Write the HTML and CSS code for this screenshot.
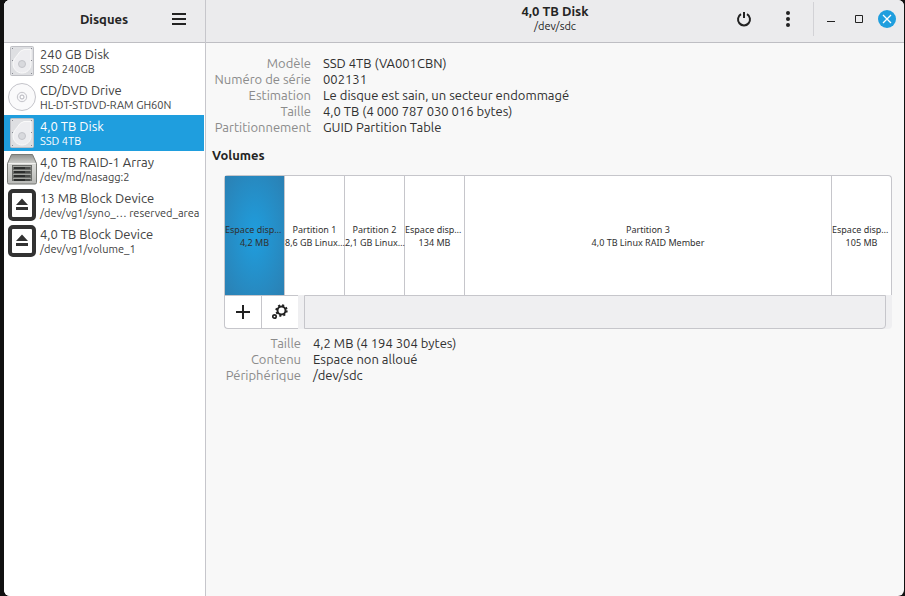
FILE: index.html
```html
<!DOCTYPE html>
<html lang="fr">
<head>
<meta charset="utf-8">
<title>Disques</title>
<link rel="stylesheet" href="styles.css">
</head>
<body>
<div class="window">
	<aside class="sidebar">
		<header class="bar side-bar">
			<h1>Disques</h1>
			<button class="icon" aria-label="Menu">
				<svg width="14" height="12" viewBox="0 0 14 12"><path d="M0 1h14M0 6h14M0 11h14" stroke="#222" stroke-width="2"/></svg>
			</button>
		</header>
		<nav class="devices">
			<button class="device">
				<svg class="pic" width="30" height="32" viewBox="0 0 30 32"><use href="#disk"/></svg>
				<span class="name">240 GB Disk<small>SSD 240GB</small></span>
			</button>
			<button class="device">
				<svg class="pic" width="30" height="32" viewBox="0 0 30 32"><circle cx="15" cy="16" r="13.5" fill="#fafafb" stroke="#c4c4ca"/><circle cx="15" cy="16" r="4.7" fill="#f6f6f8" stroke="#c4c4ca"/><circle cx="15" cy="16" r="2" fill="#fff" stroke="#b4b4bc"/></svg>
				<span class="name">CD/DVD Drive<small>HL-DT-STDVD-RAM GH60N</small></span>
			</button>
			<button class="device selected">
				<svg class="pic" width="30" height="32" viewBox="0 0 30 32"><use href="#disk"/></svg>
				<span class="name">4,0 TB Disk<small>SSD 4TB</small></span>
			</button>
			<button class="device">
				<svg class="pic" width="30" height="32" viewBox="0 0 30 32">
					<defs>
						<linearGradient id="metal" x2="0" y2="1"><stop offset="0" stop-color="#8f908d"/><stop offset=".35" stop-color="#d8d9d6"/><stop offset="1" stop-color="#b8b9b6"/></linearGradient>
					</defs>
					<path d="M4.500 1.500h21l4 9v19q0 1.500-1.500 1.500H2q-1.500 0-1.500-1.500v-19z" fill="url(#metal)" stroke="#777975"/>
					<path d="M1.500 10.500h27" stroke="#f2f2f0"/>
					<path d="M5 12h20v16H5z" fill="#6a6c69"/>
					<path d="M6 13.500h18M6 17.500h18M6 21.500h18M6 25.500h18" stroke="#a4a6a2"/>
					<path d="M7 15h11M7 19h11M7 23h11M7 27h11" stroke="#2c2e2d" stroke-width="2"/>
					<path d="M18 15h5M18 19h5M18 23h5M18 27h5" stroke="#4a4c4a" stroke-width="2"/>
				</svg>
				<span class="name">4,0 TB RAID-1 Array<small>/dev/md/nasagg:2</small></span>
			</button>
			<button class="device">
				<svg class="pic" width="30" height="32" viewBox="0 0 30 32"><use href="#block"/></svg>
				<span class="name">13 MB Block Device<small>/dev/vg1/syno_… reserved_area</small></span>
			</button>
			<button class="device">
				<svg class="pic" width="30" height="32" viewBox="0 0 30 32"><use href="#block"/></svg>
				<span class="name">4,0 TB Block Device<small>/dev/vg1/volume_1</small></span>
			</button>
		</nav>
	</aside>

	<main class="content">
		<header class="bar main-bar">
			<div class="title">
				<h2>4,0 TB Disk</h2>
				<p>/dev/sdc</p>
			</div>
			<div class="actions">
				<button class="icon" aria-label="Éteindre">
					<svg width="16" height="16" viewBox="0 0 16 16"><path d="M5 3.200a6 6 0 1 0 6 0" fill="none" stroke="#222" stroke-width="2"/><path d="M8 1v6" stroke="#222" stroke-width="2"/></svg>
				</button>
				<button class="icon" aria-label="Options du disque">
					<svg width="16" height="16" viewBox="0 0 16 16"><g fill="#222"><circle cx="8" cy="2" r="2"/><circle cx="8" cy="8" r="2"/><circle cx="8" cy="14" r="2"/></g></svg>
				</button>
			</div>
			<div class="controls">
				<button class="icon" aria-label="Réduire"><svg width="10" height="10" viewBox="0 0 10 10"><path d="M1 7.500h8" stroke="#222"/></svg></button>
				<button class="icon" aria-label="Agrandir"><svg width="10" height="10" viewBox="0 0 10 10"><path d="M1.500 1.500h7v7h-7z" fill="none" stroke="#222"/></svg></button>
				<button class="icon close" aria-label="Fermer"><svg width="10" height="10" viewBox="0 0 10 10"><path d="M1 1l8 8M9 1l-8 8" stroke="#fff" stroke-width="1.300"/></svg></button>
			</div>
		</header>

		<dl class="info">
			<dt>Modèle</dt><dd>SSD 4TB (VA001CBN)</dd>
			<dt>Numéro de série</dt><dd>002131</dd>
			<dt>Estimation</dt><dd>Le disque est sain, un secteur endommagé</dd>
			<dt>Taille</dt><dd>4,0 TB (4&nbsp;000&nbsp;787&nbsp;030&nbsp;016 bytes)</dd>
			<dt>Partitionnement</dt><dd>GUID Partition Table</dd>
		</dl>

		<h3>Volumes</h3>
		<div class="volumes">
			<div class="grid">
				<button class="volume selected"><span class="free">Espace disp…</span>4,2 MB</button>
				<button class="volume">Partition 1<br>8,6 GB Linux…</button>
				<button class="volume">Partition 2<br>2,1 GB Linux…</button>
				<button class="volume"><span class="free">Espace disp…</span>134 MB</button>
				<button class="volume large">Partition 3<br>4,0 TB Linux RAID Member</button>
				<button class="volume"><span class="free">Espace disp…</span>105 MB</button>
			</div>
			<div class="tools">
				<button aria-label="Créer une partition">
					<svg width="14" height="14" viewBox="0 0 14 14"><path d="M0 7h14M7 0v14" stroke="#222" stroke-width="2"/></svg>
				</button>
				<button aria-label="Options de partition">
					<svg width="16" height="16" viewBox="0 0 16 16">
						<circle cx="9.500" cy="6.500" r="4" fill="none" stroke="#222" stroke-width="2"/>
						<circle cx="9.500" cy="6.500" r="5.300" fill="none" stroke="#222" stroke-width="1.800" stroke-dasharray="2.080 2.080"/>
						<circle cx="2.500" cy="12.500" r="1.700" fill="none" stroke="#222" stroke-width="1.700"/>
					</svg>
				</button>
				<div class="blank"></div>
			</div>
		</div>

		<dl class="info details">
			<dt>Taille</dt><dd>4,2 MB (4&nbsp;194&nbsp;304 bytes)</dd>
			<dt>Contenu</dt><dd>Espace non alloué</dd>
			<dt>Périphérique</dt><dd>/dev/sdc</dd>
		</dl>
	</main>
</div>

<!-- shared device icons -->
<svg class="defs" width="0" height="0">
	<symbol id="disk" viewBox="0 0 30 32">
		<rect x="3.500" y="1.500" width="23" height="29" rx="1" fill="#dedfe2" stroke="#bfc0c5"/>
		<path d="M17 4.500h7v13.500a9 9 0 1 1-17-3q1-2.500 3.500-5 2-4.500 6.500-5.500z" fill="#ededf0" stroke="#fafafa"/>
		<circle cx="15" cy="19" r="3.500" fill="#d8d9dd" stroke="#c3c4c9"/>
		<path d="M5 3h1v1H5zM24 3h1v1h-1zM5 15h1v1H5zM24 15h1v1h-1zM5 28h1v1H5zM24 28h1v1h-1z" fill="#888a92"/>
	</symbol>
	<symbol id="block" viewBox="0 0 30 32">
		<rect x="3" y="2" width="24" height="28" rx="3" fill="#fff" stroke="#323232" stroke-width="4"/>
		<path d="M15 9.500l6 6.500H9zM9 18h12v3H9z" fill="#323232"/>
	</symbol>
</svg>
</body>
</html>
```

FILE: styles.css
```css
* {
	box-sizing: border-box;
}
body {
	margin: 0;
	background: #111;
	color: #303030;
	font: 13px/16px Ubuntu, "Noto Sans", sans-serif;
}
button {
	margin: 0;
	padding: 0;
	border: 0;
	background: none;
	color: inherit;
	font: inherit;
}
h1, h2, h3, p, dl, dd {
	margin: 0;
	font-size: 13px;
}
svg {
	display: block;
}
.defs {
	position: absolute;
}
.window {
	display: flex;
	min-height: 100vh;
	margin: 0 1px 0 4px;
	border-radius: 6px;
	overflow: hidden;
	background: #f8f8f8;
}
.sidebar {
	flex: none;
	width: 202px;
	background: #fff;
	border-right: 1px solid #c6c6cb;
}
.content {
	flex: 1;
	min-width: 0;
}

/* header bars */
.bar {
	display: grid;
	align-items: center;
	height: 43px;
	padding-bottom: 4px;
	background: #ebebed;
	border-bottom: 1px solid #bebec3;
	color: #242424;
}
.side-bar {
	grid-template-columns: 50px 1fr 50px;
	padding-right: 1px;
}
.side-bar h1 {
	grid-column: 2;
	text-align: center;
}
.icon {
	display: flex;
	align-items: center;
	justify-content: center;
}
.main-bar {
	grid-template-columns: 1fr auto 1fr;
}
.title {
	grid-column: 2;
	text-align: center;
	line-height: 15px;
}
.title p {
	font-size: 11px;
}
.actions, .controls {
	grid-row: 1;
	grid-column: 3;
	justify-self: end;
	display: flex;
	align-items: center;
}
.actions {
	gap: 28px;
	margin-right: 108px;
}
.controls {
	gap: 10px;
	height: 34px;
	padding: 0 8px;
	border-left: 1px solid #d2d2d6;
}
.controls .icon {
	width: 18px;
	height: 18px;
}
.controls .close {
	border-radius: 50%;
	background: #1f9ede;
}

/* device list */
.devices {
	margin-right: 1px;
}
.device {
	display: flex;
	align-items: center;
	gap: 3px;
	width: 100%;
	height: 36px;
	padding-left: 3px;
	text-align: left;
	white-space: nowrap;
	color: #424242;
}
.pic {
	flex: none;
}
.name small {
	display: block;
	font-size: 11px;
	line-height: 14px;
}
.device.selected {
	background: #1f9ede;
	color: #fff;
}

/* disk details */
.info {
	display: grid;
	grid-template-columns: 105px 1fr;
	column-gap: 12px;
	padding: 12px 12px 12px 0;
}
.info dt {
	text-align: right;
	white-space: nowrap;
	color: #8b8b8b;
}
h3 {
	padding: 0 6px 12px;
	color: #242424;
}
.volumes {
	margin: 0 12px 0 18px;
	border-radius: 4px;
	background: #efeff1;
}
.grid {
	display: flex;
	height: 120px;
	border: 1px solid #c6c6cb;
	border-bottom: 0;
	border-radius: 4px 4px 0 0;
	background: #fff;
}
.volume {
	flex: none;
	width: 60px;
	border-right: 1px solid #c6c6cb;
	font: 9px/13px "Noto Sans", sans-serif;
	text-align: center;
	white-space: nowrap;
}
.volume:last-child {
	width: 59px;
	border-right: 0;
}
.volume.large {
	flex: 1;
}
.volume.selected {
	background: radial-gradient(#1f9ede, #2b80b3);
}
.free {
	display: block;
	text-align: left;
}
.tools {
	display: flex;
	height: 34px;
	padding-right: 6px;
}
.tools button {
	display: flex;
	align-items: center;
	justify-content: center;
	width: 37px;
	border: 1px solid #c6c6cb;
	border-right: 0;
	background: #fff;
}
.tools button:first-child {
	border-bottom-left-radius: 4px;
}
.blank {
	flex: 1;
	margin-left: 6px;
	border: 1px solid #c6c6cb;
	border-bottom-right-radius: 4px;
}
.details {
	grid-template-columns: 95px 1fr;
	padding-top: 6px;
}
```
